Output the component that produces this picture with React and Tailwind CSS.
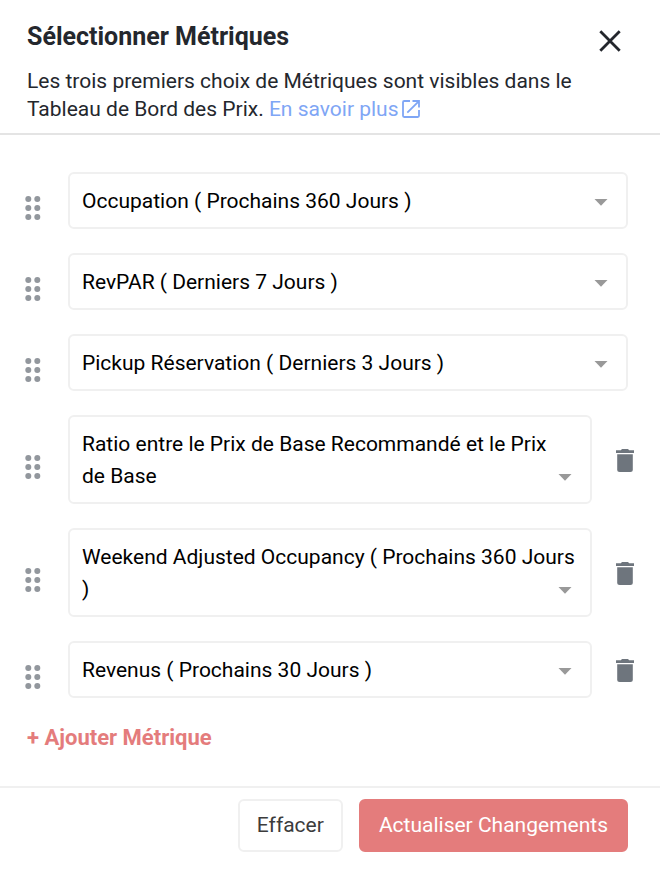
import React, { useState } from 'react';

const METRICS = [
  'Occupation ( Prochains 360 Jours )',
  'RevPAR ( Derniers 7 Jours )',
  'Pickup Réservation ( Derniers 3 Jours )',
  'Ratio entre le Prix de Base Recommandé et le Prix de\u00a0Base',
  'Weekend Adjusted Occupancy ( Prochains 360 Jours )',
  'Revenus ( Prochains 30 Jours )',
];

// The first three metrics are always shown on the dashboard
const FIXED_COUNT = 3;

const CloseIcon = () => (
  <svg viewBox="0 0 22 22" className="size-[22px]" fill="none" stroke="currentColor" strokeWidth="2.8">
    <path d="M1.3 1.3l19.4 19.4M20.7 1.3L1.3 20.7" />
  </svg>
);

const ExternalIcon = () => (
  <svg viewBox="0 0 18 18" className="size-[18px]" fill="none" stroke="currentColor" strokeWidth="1.8">
    <path d="M8 1H2.2Q1 1 1 2.2v13.6Q1 17 2.2 17h13.6q1.2 0 1.2-1.2V10" />
    <path d="M10.5 1H17v6.5M16.7 1.3L5.3 12.7" />
  </svg>
);

const GripIcon = () => (
  <svg viewBox="0 0 16 24" className="h-6 w-4" fill="currentColor">
    {[3, 12, 21].map((cy) => (
      <g key={cy}>
        <circle cx="3.3" cy={cy} r="3" />
        <circle cx="12.3" cy={cy} r="3" />
      </g>
    ))}
  </svg>
);

const TrashIcon = () => (
  <svg viewBox="0 0 18 23" className="h-[23px] w-[18px]" fill="currentColor">
    <path d="M0 1.3h4.8L6 0h6l1.2 1.3H18V4H0z" />
    <path d="M1.2 5.3h15.6v15.2q0 2.5-2.5 2.5H3.7q-2.5 0-2.5-2.5z" />
  </svg>
);

const MetricRow = ({ index, value, onChange, onRemove }) => (
  <li className="flex items-center">
    <button type="button" aria-label="Déplacer" className="mr-[27px] shrink-0 pt-[14px] text-[#92979d]">
      <GripIcon />
    </button>
    <div className="relative min-w-0 flex-1">
      <select
        aria-label={`Métrique ${index + 1}`}
        value={value}
        onChange={(e) => onChange(e.target.value)}
        className="block h-auto w-full appearance-none whitespace-normal rounded-md border-2 border-[#f0f0f0] bg-white px-3 pt-[11px] pb-[10px] text-[21px] leading-8 text-black"
      >
        {METRICS.map((metric) => (
          <option key={metric}>{metric}</option>
        ))}
      </select>
      <svg viewBox="0 0 14 7" className="pointer-events-none absolute right-5 bottom-[23px] h-[7px] w-[14px]" fill="#999">
        <path d="M.5 0h13L7 6.8z" />
      </svg>
    </div>
    {onRemove && (
      <button type="button" aria-label="Supprimer" onClick={onRemove} className="-mr-[6px] ml-6 shrink-0 pt-[2px] text-[#6e757d]">
        <TrashIcon />
      </button>
    )}
  </li>
);

const App = () => {
  const [selected, setSelected] = useState(METRICS);

  const update = (index, value) => {
    setSelected(selected.map((item, i) => (i === index ? value : item)));
  };

  const remove = (index) => {
    setSelected(selected.filter((_, i) => i !== index));
  };

  return (
    <div className="bg-white font-[Roboto,'Liberation_Sans',sans-serif] text-[21px] text-[#24272d]">
      {/* Header */}
      <header className="flex items-start justify-between border-b-2 border-[#e4e4e4] pt-[21px] pr-[39px] pb-[10px] pl-[27px]">
        <div>
          <h1 className="mb-[14px] text-[25px] leading-8 font-bold">Sélectionner Métriques</h1>
          <p className="max-w-[560px] leading-7">
            Les trois premiers choix de Métriques sont visibles dans le Tableau de Bord des Prix.{' '}
            <a href="#" className="inline-flex items-center gap-[3px] align-top text-[#7fa6f5]">
              En savoir plus
              <ExternalIcon />
            </a>
          </p>
        </div>
        <button type="button" aria-label="Fermer" className="mt-[9px] shrink-0">
          <CloseIcon />
        </button>
      </header>

      {/* Metrics */}
      <main className="pt-[37px] pr-8 pb-8 pl-[25px]">
        <ul className="flex flex-col gap-6">
          {selected.map((metric, i) => (
            <MetricRow
              key={i}
              index={i}
              value={metric}
              onChange={(value) => update(i, value)}
              onRemove={i >= FIXED_COUNT ? () => remove(i) : undefined}
            />
          ))}
        </ul>
        <button
          type="button"
          onClick={() => setSelected([...selected, METRICS[0]])}
          className="mt-6 ml-[2px] block text-[22px] leading-8 font-bold text-[#e47c7c]"
        >
          + Ajouter Métrique
        </button>
      </main>

      {/* Footer */}
      <footer className="flex justify-end gap-4 border-t-2 border-[#f0f0f0] pt-[11px] pr-8 pb-[22px]">
        <button type="button" className="rounded-md border-2 border-[#f0f0f0] px-[17px] py-2 leading-[33px] text-[#3c3c3c]">
          Effacer
        </button>
        <button type="button" className="rounded-md border-2 border-[#e47c7c] bg-[#e47c7c] px-[18px] py-2 leading-[33px] text-white">
          Actualiser Changements
        </button>
      </footer>
    </div>
  );
};

export default App;
